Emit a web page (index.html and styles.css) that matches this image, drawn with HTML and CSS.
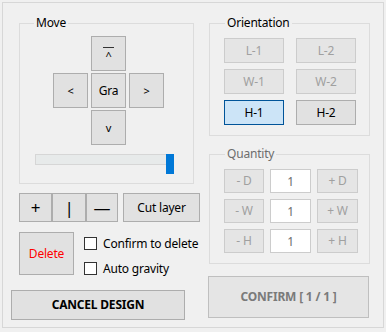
FILE: index.html
```html
<!DOCTYPE html>
<html>
<head>
<meta charset="utf-8">
<link rel="stylesheet" href="styles.css">
</head>
<body>
<div class="frame">
  <div class="col-left">
    <fieldset class="group move">
      <legend>Move</legend>
      <div class="dpad">
        <span></span>
        <button class="btn pad up"><span class="upglyph">^</span></button>
        <span></span>
        <button class="btn pad small">&lt;</button>
        <button class="btn pad">Gra</button>
        <button class="btn pad small">&gt;</button>
        <span></span>
        <button class="btn pad small">v</button>
        <span></span>
      </div>
      <div class="slider">
        <div class="track"></div>
        <div class="thumb"></div>
      </div>
    </fieldset>
    <div class="tools">
      <button class="btn seg seg1 big">+</button>
      <button class="btn seg seg2 big">|</button>
      <button class="btn seg seg3 big">—</button>
      <button class="btn cut">Cut layer</button>
    </div>
    <div class="delrow">
      <button class="btn del">Delete</button>
      <div class="checks">
        <label class="chk"><input type="checkbox"><span>Confirm to delete</span></label>
        <label class="chk"><input type="checkbox"><span>Auto gravity</span></label>
      </div>
    </div>
    <button class="btn cancel">CANCEL DESIGN</button>
  </div>
  <div class="col-right">
    <fieldset class="group orient">
      <legend>Orientation</legend>
      <div class="ogrid">
        <button class="btn dis obtn">L-1</button>
        <button class="btn dis obtn">L-2</button>
        <button class="btn dis obtn">W-1</button>
        <button class="btn dis obtn">W-2</button>
        <button class="btn sel obtn">H-1</button>
        <button class="btn obtn">H-2</button>
      </div>
    </fieldset>
    <fieldset class="group qty">
      <legend class="dislegend">Quantity</legend>
      <div class="qgrid">
        <button class="btn dis qbtn">- D</button>
        <div class="qbox">1</div>
        <button class="btn dis qbtn">+ D</button>
        <button class="btn dis qbtn">- W</button>
        <div class="qbox">1</div>
        <button class="btn dis qbtn">+ W</button>
        <button class="btn dis qbtn">- H</button>
        <div class="qbox">1</div>
        <button class="btn dis qbtn">+ H</button>
      </div>
    </fieldset>
    <button class="btn dis confirm">CONFIRM [ 1 / 1 ]</button>
  </div>
</div>
</body>
</html>
```

FILE: styles.css
```css
* { box-sizing: border-box; }
html, body {
  margin: 0;
  padding: 0;
  background: #f0f0f0;
  font-family: "Noto Sans", "Open Sans", sans-serif;
  font-size: 12px;
  letter-spacing: -0.2px;
  color: #000;
}
.frame {
  margin: 2px 0 0 2px;
  width: 382px;
  height: 326px;
  border: 1px solid #d7d7d7;
  display: flex;
}
.col-left {
  width: 190px;
  flex: none;
  display: flex;
  flex-direction: column;
}
.col-right {
  margin-left: 15px;
  width: 163px;
  flex: none;
  display: flex;
  flex-direction: column;
}
.group {
  margin: 13px 0 0 0;
  padding: 0;
  border: 1px solid #dcdcdc;
  min-width: 0;
}
.group legend {
  padding: 0 2px;
  line-height: 14px;
  height: 14px;
  font-size: 12px;
}
.move {
  margin-left: 16px;
  width: 175px;
  height: 168px;
}
.move legend { margin-left: 14px; }
.btn {
  font-family: inherit;
  font-size: 12px;
  letter-spacing: -0.2px;
  background: #e1e1e1;
  border: 1px solid #adadad;
  color: #000;
  padding: 0;
  margin: 0;
  display: flex;
  align-items: center;
  justify-content: center;
  line-height: 1;
  white-space: nowrap;
  flex: none;
}
.dpad {
  margin: 6px 0 0 33px;
  display: grid;
  grid-template-columns: repeat(3, 35px);
  grid-template-rows: repeat(3, 35px);
  column-gap: 3px;
  row-gap: 2px;
}
.pad { width: 35px; height: 35px; }
.pad.small { font-size: 11px; }
.upglyph {
  display: block;
  border-top: 1px solid #333;
  width: 11px;
  font-size: 11px;
  line-height: 10px;
  padding-top: 3px;
  text-align: center;
}
.slider {
  position: relative;
  margin: 9px 0 0 15px;
  width: 140px;
  height: 20px;
}
.track {
  margin-top: 4px;
  width: 136px;
  height: 11px;
  background: #e7eaea;
  border: 1px solid #d6d6d6;
}
.thumb {
  position: absolute;
  left: 131px;
  top: 0;
  width: 8px;
  height: 20px;
  background: #0078d7;
}
.tools {
  display: flex;
  margin: 9px 0 0 16px;
  height: 29px;
}
.seg { height: 29px; }
.seg1 { width: 33px; }
.seg2 { width: 34px; }
.seg3 { width: 32px; }
.big { font-size: 17px; }
.cut { width: 77px; height: 29px; margin-left: 5px; }
.delrow {
  display: flex;
  margin: 10px 0 0 16px;
}
.del {
  width: 55px;
  height: 43px;
  color: #ff0000;
}
.checks {
  margin-left: 9px;
  padding-top: 3px;
  display: flex;
  flex-direction: column;
  row-gap: 8px;
}
.chk {
  display: flex;
  align-items: center;
  height: 17px;
  white-space: nowrap;
  cursor: default;
}
.chk input {
  appearance: none;
  -webkit-appearance: none;
  margin: 0 6px 0 1px;
  width: 13px;
  height: 13px;
  background: #fff;
  border: 1px solid #333;
  flex: none;
}
.cancel {
  margin: 13px 0 0 8px;
  width: 174px;
  height: 30px;
  font-weight: bold;
}
.orient, .qty {
  margin-left: 1px;
  width: 161px;
}
.orient legend, .qty legend { margin-left: 15px; }
.dislegend { color: #6d6d6d; }
.ogrid {
  margin: 8px 0 10px 14px;
  display: grid;
  grid-template-columns: 60px 60px;
  column-gap: 12px;
  row-gap: 6px;
}
.obtn { height: 25px; }
.dis {
  background: #e5e5e5;
  border-color: #cccccc;
  color: #a0a0a0;
}
.sel {
  background: #cce4f7;
  border-color: #005499;
}
.qty { margin-top: 11px; }
.qgrid {
  margin: 8px 0 10px 14px;
  display: grid;
  grid-template-columns: 40px 41px 41px;
  grid-auto-rows: 24px;
  column-gap: 6px;
  row-gap: 6px;
}
.qbox {
  background: #fff;
  border: 1px solid #cccccc;
  color: #6d6d6d;
  display: flex;
  align-items: center;
  justify-content: center;
}
.confirm {
  margin-top: 12px;
  width: 161px;
  height: 42px;
  font-weight: bold;
  color: #7a7a7a;
  border-color: #bfbfbf;
}
```
